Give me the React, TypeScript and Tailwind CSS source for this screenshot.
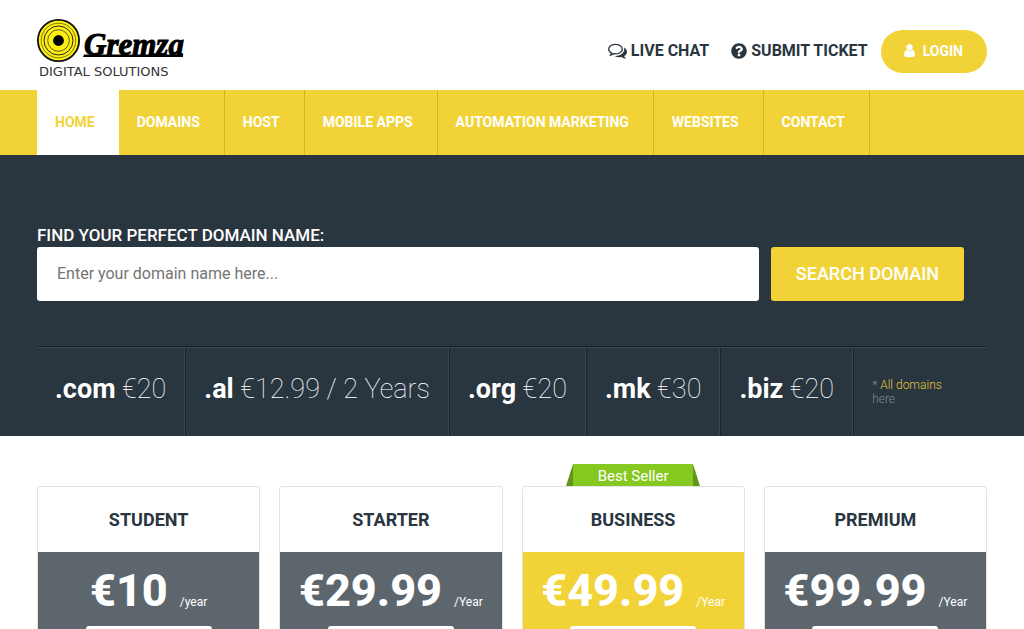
import React from "react";
import { FaQuestionCircle } from "react-icons/fa";

const navItems = ["HOME", "DOMAINS", "HOST", "MOBILE APPS", "AUTOMATION MARKETING", "WEBSITES", "CONTACT"];

const domains = [
  { tld: ".com", price: "€20" },
  { tld: ".al", price: "€12.99 / 2 Years" },
  { tld: ".org", price: "€20" },
  { tld: ".mk", price: "€30" },
  { tld: ".biz", price: "€20" },
];

const plans = [
  { name: "STUDENT", price: "€10", period: "/year", best: false },
  { name: "STARTER", price: "€29.99", period: "/Year", best: false },
  { name: "BUSINESS", price: "€49.99", period: "/Year", best: true },
  { name: "PREMIUM", price: "€99.99", period: "/Year", best: false },
];

function Logo() {
  return (
    <a href="#" aria-label="Gremza Digital Solutions" className="block">
      <svg width="152" height="64" viewBox="0 0 152 64">
        <circle cx="21.5" cy="25.5" r="20.6" fill="#fdf010" stroke="#111" strokeWidth="1.8" />
        <circle cx="21.5" cy="25.5" r="17.3" fill="none" stroke="#4a470a" strokeWidth="0.7" />
        <circle cx="21.5" cy="25.5" r="14.5" fill="none" stroke="#222" strokeWidth="1" />
        <circle cx="21.5" cy="25.5" r="10.8" fill="none" stroke="#333" strokeWidth="0.8" />
        <circle cx="21.5" cy="25.5" r="5.4" fill="#000" />
        <text x="47" y="40" fontFamily="'Liberation Serif', serif" fontSize="31" fontWeight="bold" fontStyle="italic" stroke="#000" strokeWidth="1">
          Gremza
        </text>
        <path d="M47 39.5H146V42H46Z" />
        <text x="2" y="61" fontFamily="'DejaVu Sans', sans-serif" fontSize="13" fill="#333">
          DIGITAL SOLUTIONS
        </text>
      </svg>
    </a>
  );
}

function CommentsIcon() {
  return (
    <svg width="19" height="19" viewBox="0 0 1792 1792" fill="currentColor" aria-hidden="true">
      <path d="M704 384q-153 0-286 52t-211.5 141-78.5 191q0 82 53 158t149 132l97 56-35 84q34-20 62-39l44-31 53 10q78 14 153 14 153 0 286-52t211.5-141 78.5-191-78.5-191-211.5-141-286-52zm0-128q191 0 353.5 68.5t256.5 186.5 94 257-94 257-256.5 186.5-353.5 68.5q-86 0-176-16-124 88-278 128-36 9-86 16h-3q-11 0-20.5-8t-11.5-21q-1-3-1-6.5t.5-6.5 2-6l2.5-5 3.5-5.5 4-5 4.5-5 4-4.5q5-6 23-25t26-29.5 22.5-29 25-38.5 20.5-44q-124-72-195-177t-71-224q0-139 94-257t256.5-186.5 353.5-68.5zm822 1169q10 24 20.5 44t25 38.5 22.5 29 26 29.5 23 25q1 1 4 4.5t4.5 5 4 5 3.5 5.5l2.5 5 2 6 .5 6.5-1 6.5q-3 14-13 22t-22 7q-50-7-86-16-154-40-278-128-90 16-176 16-271 0-472-132 58 4 88 4 161 0 309-45t264-129q125-92 192-212t67-254q0-77-23-152 129 71 204 178t75 230q0 120-71 224.5t-195 176.5z" />
    </svg>
  );
}

function UserIcon() {
  return (
    <svg width="15" height="15" viewBox="0 0 1792 1792" fill="currentColor" aria-hidden="true">
      <path d="M1536 1399q0 109-62.5 187t-150.5 78h-854q-88 0-150.5-78t-62.5-187q0-85 8.5-160.5t31.5-152 58.5-131 94-89 134.5-34.5q131 128 313 128t313-128q76 0 134.5 34.5t94 89 58.5 131 31.5 152 8.5 160.5zm-256-887q0 159-112.5 271.5t-271.5 112.5-271.5-112.5-112.5-271.5 112.5-271.5 271.5-112.5 271.5 112.5 112.5 271.5z" />
    </svg>
  );
}

function Header() {
  return (
    <header className="flex h-[90px] items-start justify-between px-[37px]">
      <div className="pt-[15px]">
        <Logo />
      </div>
      <div className="flex items-center pt-[30px] text-base font-bold text-[#29353f]">
        <a href="#" className="mr-[22px] flex items-center gap-1 pb-0.5">
          <CommentsIcon />
          LIVE CHAT
        </a>
        <a href="#" className="mr-[13px] flex items-center gap-1 pb-0.5">
          <FaQuestionCircle size={16} aria-hidden="true" />
          SUBMIT TICKET
        </a>
        <button type="button" className="flex h-[43px] items-center gap-1.5 rounded-full bg-[#f1d338] pr-6 pb-0.5 pl-[21px] text-sm font-bold text-white">
          <UserIcon />
          LOGIN
        </button>
      </div>
    </header>
  );
}

function Nav() {
  return (
    <nav className="bg-[#f1d338] px-[37px]">
      <ul className="flex h-[65px] text-sm font-bold">
        {navItems.map((item, i) => (
          <li key={item} className="flex">
            <a
              href="#"
              className={
                i === 0
                  ? "flex items-center bg-white pr-6 pb-0.5 pl-[18px] text-[#f1d338]"
                  : "flex items-center border-r border-[#d0b52c] pr-6 pb-0.5 pl-[18px] text-white"
              }
            >
              {item}
            </a>
          </li>
        ))}
      </ul>
    </nav>
  );
}

function DomainSearch() {
  return (
    <section className="bg-[#29353f] px-[37px] pt-[69px]">
      <form onSubmit={(e) => e.preventDefault()}>
        <label htmlFor="domain" className="block pb-px text-[17px] leading-[22px] font-medium text-white">
          FIND YOUR PERFECT DOMAIN NAME:
        </label>
        <div className="flex gap-3 pr-[23px]">
          <input
            id="domain"
            type="text"
            placeholder="Enter your domain name here..."
            className="h-[54px] min-w-0 flex-1 rounded-[3px] bg-white px-5 pb-0.5 text-base text-gray-800 placeholder:text-[#757575]"
          />
          <button type="submit" className="h-[54px] rounded-[3px] bg-[#f1d338] px-[25px] text-lg font-medium text-white">
            SEARCH DOMAIN
          </button>
        </div>
      </form>
      <div className="mt-[45px] flex border-t border-[#1a232b]">
        <ul className="flex border-t border-[#37434d]">
          {domains.map((d) => (
            <li key={d.tld} className="flex h-[88px] border-r border-[#1a232b]">
              <span className="block border-r border-[#37434d] px-[18px] pt-[23px] text-[27px] leading-9 font-thin whitespace-nowrap text-white">
                <b className="font-bold">{d.tld}</b> {d.price}
              </span>
            </li>
          ))}
        </ul>
        <p className="flex-1 border-t border-[#37434d] pt-[30px] pl-[18px] text-xs leading-[14px] font-light text-[#84898e]">
          * <a href="#" className="text-[#e0c63a]">All domains</a>
          <br />
          here
        </p>
      </div>
    </section>
  );
}

function Plans() {
  return (
    <section className="grid grid-cols-4 gap-[19px] px-[37px] pt-[50px]">
      {plans.map((p) => (
        <article key={p.name} className="relative h-[143px] rounded-t-[3px] border border-b-0 border-[#e1e3e4] text-center">
          {p.best && (
            <div className="absolute inset-x-0 -top-[23px] flex justify-center">
              <svg width="7" height="22" viewBox="0 0 7 22" aria-hidden="true">
                <path d="M7 0V22H0Z" fill="#62961a" />
              </svg>
              <span className="h-[22px] w-[120px] bg-[#85c81f] text-[15px] leading-6 text-white">Best Seller</span>
              <svg width="7" height="22" viewBox="0 0 7 22" aria-hidden="true">
                <path d="M0 0V22H7Z" fill="#62961a" />
              </svg>
            </div>
          )}
          <h2 className="h-[65px] text-lg leading-[65px] font-bold text-[#29353f]">{p.name}</h2>
          <div className={p.best ? "h-[77px] overflow-hidden bg-[#f1d338] text-white" : "h-[77px] overflow-hidden bg-[#5e666d] text-white"}>
            <p className="flex h-[74px] items-baseline justify-center gap-3 pt-[9px]">
              <span className="text-[45px] leading-[60px] font-extrabold">{p.price}</span>
              <span className="text-xs">{p.period}</span>
            </p>
            <div className="mx-auto h-10 w-[126px] rounded-[3px] bg-white" />
          </div>
        </article>
      ))}
    </section>
  );
}

export default function App() {
  return (
    <div className="bg-white font-[Roboto,sans-serif]">
      <Header />
      <Nav />
      <main>
        <DomainSearch />
        <Plans />
      </main>
    </div>
  );
}
